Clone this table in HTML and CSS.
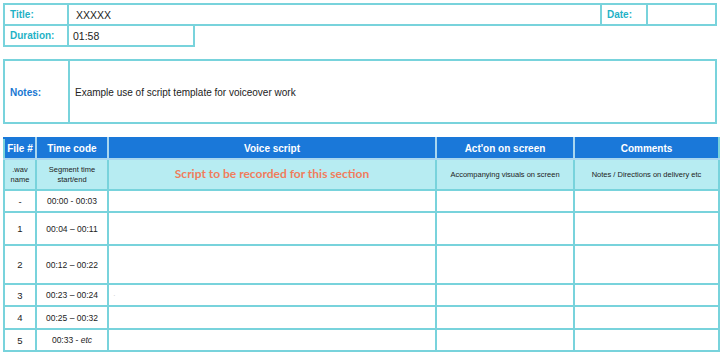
FILE: index.html
```html
<!DOCTYPE html>
<html lang="en">
<head>
    <meta charset="UTF-8">
    <meta name="viewport" content="width=device-width, initial-scale=1.0">
    <title>Voiceover Script Template</title>
    <link rel="stylesheet" href="styles.css">
</head>
<body>
    <div class="page">
        <!-- Header info: title, date, duration -->
        <table class="info">
            <colgroup>
                <col class="c-label">
                <col class="c-dur">
                <col>
                <col class="c-date">
                <col class="c-dateval">
            </colgroup>
            <tr>
                <th>Title:</th>
                <td colspan="2" class="title-val">XXXXX</td>
                <th>Date:</th>
                <td></td>
            </tr>
            <tr>
                <th>Duration:</th>
                <td>01:58</td>
                <td class="blank" colspan="3"></td>
            </tr>
        </table>

        <!-- Notes box -->
        <table class="notes">
            <colgroup>
                <col class="n-label">
                <col>
            </colgroup>
            <tr>
                <th>Notes:</th>
                <td>Example use of script template for voiceover work</td>
            </tr>
        </table>

        <!-- Script table -->
        <table class="script">
            <colgroup>
                <col class="s-file">
                <col class="s-time">
                <col>
                <col class="s-action">
                <col class="s-comments">
            </colgroup>
            <thead>
                <tr class="head">
                    <th>File #</th>
                    <th>Time code</th>
                    <th>Voice script</th>
                    <th>Act'on on screen</th>
                    <th>Comments</th>
                </tr>
                <tr class="sub">
                    <td>.wav<br>name</td>
                    <td>Segment time<br>start/end</td>
                    <td class="hint">Script to be recorded for this section</td>
                    <td>Accompanying visuals on screen</td>
                    <td>Notes / Directions on delivery etc</td>
                </tr>
            </thead>
            <tbody>
                <tr class="r-22"><td>-</td><td>00:00 - 00:03</td><td></td><td></td><td></td></tr>
                <tr class="r-33"><td>1</td><td>00:04 – 00:11</td><td></td><td></td><td></td></tr>
                <tr class="r-39"><td>2</td><td>00:12 – 00:22</td><td></td><td></td><td></td></tr>
                <tr class="r-22"><td>3</td><td>00:23 – 00:24</td><td class="speck">·</td><td></td><td></td></tr>
                <tr class="r-23"><td>4</td><td>00:25 – 00:32</td><td></td><td></td><td></td></tr>
                <tr class="r-22"><td>5</td><td>00:33 - <i>etc</i></td><td></td><td></td><td></td></tr>
            </tbody>
        </table>
    </div>
</body>
</html>
```

FILE: styles.css
```css
:root {
    --line: #78d3dc;
    --teal-text: #1fb2c6;
    --blue-text: #1877d2;
    --head-blue: #1a78d9;
    --sub-cyan: #b7ecf2;
    --hint: #f07d5c;
    --text: #222;
}

body {
    margin: 0;
    background: #fff;
    font-family: "Liberation Sans", Arial, sans-serif;
    color: var(--text);
}

.page {
    padding: 3px 0 0 3px;
}

table {
    border-collapse: collapse;
    table-layout: fixed;
}

td, th {
    border: 2px solid var(--line);
    padding: 0;
}

/* Title / date / duration block */
.info {
    width: 714px;
}

.info .c-label { width: 64px; }
.info .c-dur { width: 126px; }
.info .c-date { width: 46px; }
.info .c-dateval { width: 69px; }

.info tr {
    height: 21px;
}

.info th {
    text-align: left;
    color: var(--teal-text);
    font-size: 10px;
    font-weight: 700;
    padding-left: 5px;
}

.info td {
    font-size: 10.5px;
    padding-left: 4px;
}

.info .title-val {
    padding-left: 7px;
}

.info .blank {
    border: none;
}

/* Notes block */
.notes {
    width: 714px;
    margin-top: 12px;
}

.notes .n-label { width: 65px; }

.notes tr {
    height: 63px;
}

.notes th {
    text-align: left;
    color: var(--blue-text);
    font-size: 10px;
    font-weight: 700;
    padding-left: 5px;
    padding-top: 2px;
}

.notes td {
    font-size: 10px;
    padding-left: 5px;
    padding-top: 2px;
}

/* Script table */
.script {
    width: 717px;
    margin-top: 13px;
}

.script .s-file { width: 32px; }
.script .s-time { width: 72px; }
.script .s-action { width: 138px; }
.script .s-comments { width: 145px; }

.script td, .script th {
    text-align: center;
}

.script .head {
    height: 21px;
    background: var(--head-blue);
}

.script .head th {
    color: #fff;
    font-size: 10px;
    font-weight: 700;
    border-color: #a9d6ef;
    border-top-color: var(--head-blue);
}

.script .head th:first-child {
    border-left-color: var(--line);
}

.script .head th:last-child {
    border-right-color: var(--line);
}

.script .sub {
    height: 31px;
    background: var(--sub-cyan);
}

.script .sub td {
    font-size: 7.5px;
    line-height: 10px;
}

.script .sub .hint {
    font-family: Lato, "Liberation Sans", sans-serif;
    font-size: 12px;
    font-weight: 700;
    color: var(--hint);
    padding-bottom: 2px;
}

.script tbody td {
    font-size: 8.5px;
}

.script tbody td:first-child {
    font-size: 9.5px;
}

.script .speck {
    text-align: left;
    padding-left: 4px;
    color: #ccc;
    font-size: 8px;
}

.r-22 { height: 22px; }
.r-23 { height: 23px; }
.r-33 { height: 33px; }
.r-39 { height: 39px; }
```
